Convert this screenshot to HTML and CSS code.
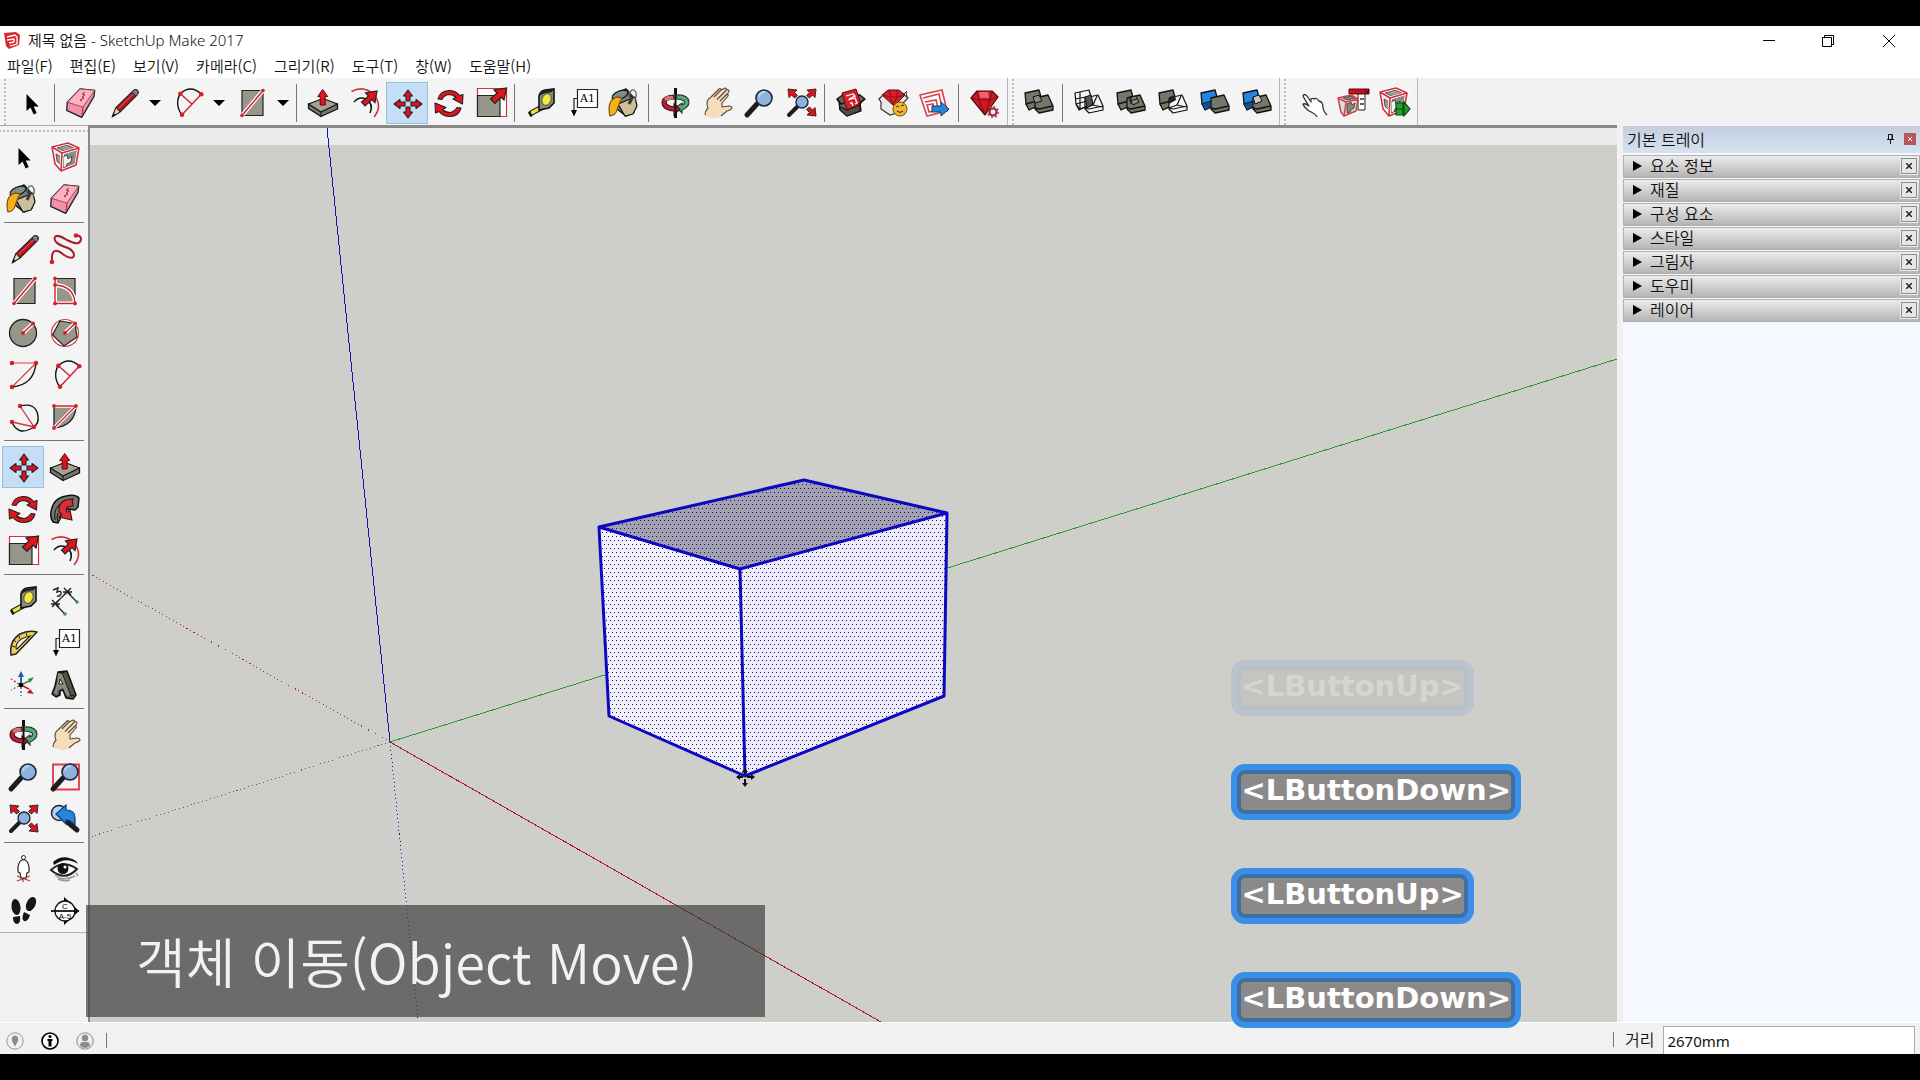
FILE: index.html
```html
<!DOCTYPE html>
<html lang="ko">
<head>
  <meta charset="UTF-8">
  <meta name="viewport" content="width=device-width, initial-scale=1.0">
  <title>제목 없음 - SketchUp Make 2017</title>
  <link rel="stylesheet" href="styles.css">
</head>
<body>
  <!-- icon sprite, every symbol is on a 42px grid -->
  <svg class="sprite" aria-hidden="true">
    <symbol id="i-select" viewBox="0 0 42 42">
      <path d="M16.500 12v17l4-3.600 3.200 7 3-1.300-3-6.600h5z"/>
    </symbol>
    <symbol id="i-eraser" viewBox="0 0 42 42">
      <path d="M20 7l14.700 1.300-.7 6-12.300 21-15-7 .6-8z" fill="#f78fa9" stroke="#222" stroke-width="1.300" stroke-linejoin="round"/>
      <path d="M20 7l14.700 1.300L23 25 7.300 20.300z" fill="#fbb3c4" stroke="#7a3a4a" stroke-width=".8"/>
      <path d="M23 25l-1.300 10" stroke="#7a3a4a"/>
      <path d="M25 10l-3 2 3 1-3 2 2 1-4 2 2 1" fill="none" stroke="#a02c48"/>
    </symbol>
    <symbol id="i-pencil" viewBox="0 0 42 42">
      <path d="M10.500 34.500l3.500-9L32 8q3-1 4 1Q37 11 35 13L18 30z" fill="#c01820" stroke="#222" stroke-width="1.200"/>
      <path d="M10.500 34.500l3.500-9 4 4.500z" fill="#e9d8a6" stroke="#222"/>
      <path d="M10 35l1.500-4 2 2z"/>
      <path d="M30 10l4 4 1.500-1.500q1.500-3-.5-4.500-2-1-3 0z" fill="#7d7f88" stroke="#222" stroke-width=".8"/>
      <path d="M17 26L31 12" stroke="#ee5a5a"/>
    </symbol>
    <symbol id="i-arc2" viewBox="0 0 42 42">
      <path d="M16 32.700A16 17 0 0 1 14.300 11.700Q25 2 35.300 12.300" fill="none" stroke="#111" stroke-width="1.400"/>
      <path d="M16 32.700L35.300 12.300M14.300 11.700L26 22" fill="none" stroke="#d4202c" stroke-width="1.400"/>
      <g fill="#d4202c"><circle cx="16" cy="32.700" r="2.300"/><circle cx="14.300" cy="11.700" r="2.300"/><circle cx="35.300" cy="12.300" r="2.300"/></g>
    </symbol>
    <symbol id="i-rect" viewBox="0 0 42 42">
      <path d="M12 8.500h21v25H12z" fill="#97968a" stroke="#222" stroke-width="1.200"/>
      <path d="M12 33.500l21-25" stroke="#fff" stroke-width="4"/>
      <path d="M12 33.500l21-25" stroke="#d4202c" stroke-width="1.500"/>
      <g fill="#d4202c"><circle cx="12" cy="33.500" r="1.800"/><circle cx="33" cy="8.500" r="1.800"/></g>
    </symbol>
    <symbol id="i-pushpull" viewBox="0 0 42 42">
      <path d="M6.500 22v4.500l12.500 8 16.500-7.500v-5z" fill="#77766a" stroke="#111" stroke-width="1.300" stroke-linejoin="round"/>
      <path d="M6.500 22L21 16.500 35.500 22 19 30z" fill="#a3a295" stroke="#111" stroke-width="1.200" stroke-linejoin="round"/>
      <path d="M19 30v4.500" stroke="#111"/>
      <path d="M20.700 7.500l5 7h-2.500v8.500h-5v-8.500h-2.500z" fill="#e0141e" stroke="#5a0a0e"/>
    </symbol>
    <symbol id="i-offset" viewBox="0 0 42 42">
      <path d="M7.500 9.500Q20 3 30 13q9 11 0 22" fill="none" stroke="#d4303a" stroke-width="1.600"/>
      <path d="M10 20q5-6 12-3 8 5 4 14" fill="none" stroke="#111" stroke-width="1.500"/>
      <path d="M33 9l-2 11.500-3-3-7 6.500-3.500-4 7-6-3-3z" fill="#e0141e" stroke="#222" stroke-width="1.200"/>
    </symbol>
    <symbol id="i-move" viewBox="0 0 42 42">
      <g fill="#e0141e" stroke="#222" stroke-width="1.100" stroke-linejoin="round">
        <path d="M22 8l4.500 6h-2.500v5h-4v-5h-2.500z"/>
        <path d="M22 36l4.500-6h-2.500v-5h-4v5h-2.500z"/>
        <path d="M8 22l6-4.500v2.500h5v4h-5v2.500z"/>
        <path d="M36 22l-6-4.500v2.500h-5v4h5v2.500z"/>
      </g>
    </symbol>
    <symbol id="i-rotate" viewBox="0 0 42 42">
      <g fill="#e0141e" stroke="#222" stroke-width="1.100" stroke-linejoin="round">
        <path d="M10 17Q12 9 21 8.500q7 0 10.500 5l3.500-1-.5 9.500-9.500-5 3-1.500q-3-3-7-3-5 .5-7 5z"/>
        <path d="M33 26q-2 8-11 8.500-7 0-11-5l-3.500 1.500L7 21l11 4.500-3.500 2q3 3 7.500 3 4-.5 7-5z"/>
      </g>
    </symbol>
    <symbol id="i-scale" viewBox="0 0 42 42">
      <path d="M7.500 6.500h29v28h-29z" fill="#fff" stroke="#d4303a" stroke-width="1.200"/>
      <path d="M7.500 13.500h22.500v21H7.500z" fill="#97968a" stroke="#222" stroke-width="1.200"/>
      <path d="M36.500 6l-2.500 12-3-3-6 6.500-4.500-4.500 6.500-6-3-3z" fill="#e0141e" stroke="#222" stroke-width="1.200"/>
    </symbol>
    <symbol id="i-tape" viewBox="0 0 42 42">
      <path d="M9.500 29.500l11-6 2 4-11 6z" fill="#f4e23a" stroke="#222" stroke-width="1.200"/>
      <path d="M9 30l2.500 4.500" stroke="#111" stroke-width="2.500"/>
      <path d="M19 14Q20 9 25 8l9-1v14l-5 5-10 2z" fill="#8a8a86" stroke="#111" stroke-width="1.600"/>
      <path d="M20 11q3-3 14-3.500l-3 3q-7 0-11 3z" fill="#222"/>
      <ellipse cx="26.500" cy="17.500" rx="4.500" ry="6" fill="#f4ea3c" stroke="#55553c" transform="rotate(20 26.500 17.500)"/>
    </symbol>
    <symbol id="i-paint" viewBox="0 0 42 42">
      <path d="M10 13l12-6 8 9 0 14-8 4-9-7z" fill="#77827f" stroke="#111" stroke-width="1.500" stroke-linejoin="round"/>
      <path d="M14 22l17-7 2 9-4 8-8 2z" fill="#cdbf9a" stroke="#111" stroke-width="1.200"/>
      <path d="M22 8l6 8-3 6" fill="none" stroke="#3a3a3a" stroke-width="3"/>
      <ellipse cx="16" cy="13" rx="8.500" ry="4" fill="#7e908d" stroke="#111" stroke-width="1.200" transform="rotate(-22 16 13)"/>
      <path d="M25 14q1-7 5-6 4 3 1 10" fill="none" stroke="#666" stroke-width="1.300"/>
      <path d="M18 16q-8-3-12 5-2 6 0 13 6-1 7-6 2-7 5-12z" fill="#f7b01c" stroke="#704c08" stroke-width="1.100"/>
    </symbol>
    <symbol id="i-orbit" viewBox="0 0 42 42">
      <path d="M22 13q12-1 13 7 0 5-7 8v3l-6-6 6-4v2q4-2 2-4-3-2-8-2z" fill="#5fa57a" stroke="#1d3f2a" stroke-width="1.100"/>
      <path d="M20 13Q8 14 8 20q0 8 12 9v4l6-6-6-5v3q-8-1-8-5 1-3 8-3z" fill="#c0203a" stroke="#4a0a14" stroke-width="1.100"/>
      <path d="M20 6h3v6h-3zM20.500 11h2v20h-2zM20 31h3v5h-3z" fill="#111"/>
      <path d="M10 16q4-3 9-2v3l-7 2z" fill="#cf7771"/>
    </symbol>
    <symbol id="i-hand" viewBox="0 0 42 42">
      <path d="M9 34q0-4 3-8-3-7 3-11l8-8q2-1 2 1l4-2q2 0 1 2 3-1 3 1t-3 4q3-1 2 1l-6 7 0 4 7-1q3 0 3 2-1 2-5 3-4 3-6 5-5 3-8 2z" fill="#f5ddbc"/>
      <path d="M9 33q0-4 3-7-3-7 3-11l8-8q2-1 2 1l4-2q2 0 1 2 3-1 3 1t-3 4q3-1 2 1l-6 7v4l7-1q3 0 3 2-1 2-5 3-4 3-6 5M25 8l-7 7M30 8.500l-9 9M30 13l-6 6" fill="none" stroke="#54493c" stroke-width="1.100" stroke-linejoin="round"/>
    </symbol>
    <symbol id="i-zoom" viewBox="0 0 42 42">
      <path d="M9 33l10-11" stroke="#1c1c1e" stroke-width="5" stroke-linecap="round"/>
      <circle cx="26" cy="16" r="8" fill="#8fb2dc" stroke="#1d2a3c" stroke-width="1.600"/>
      <path d="M21 15q1-5 6-5" fill="none" stroke="#bcd3ee" stroke-width="2"/>
    </symbol>
    <symbol id="i-extents" viewBox="0 0 42 42">
      <path d="M9 33l8-8" stroke="#1c1c1e" stroke-width="4" stroke-linecap="round"/>
      <circle cx="22" cy="20" r="6" fill="#8fb2dc" stroke="#1d2a3c" stroke-width="1.400"/>
      <g fill="#d8141e" stroke="#222" stroke-width=".9">
        <path d="M8 7l9 1-2.500 2.500 3 3-3 2.500-3-3L9 15.500z"/>
        <path d="M36 7l-9 1 2.500 2.500-3 3 3 2.500 3-3 2.500 2.500z"/>
        <path d="M36 34l-9-1 2.500-2.500-3-3 3-2.500 3 3 2.500-2.500z"/>
      </g>
    </symbol>
    <symbol id="i-warehouse" viewBox="0 0 42 42">
      <path d="M7 17l7-5 16 1 5 4-5 4 1 8-14 5-7-6-1-8z" fill="#6d6256" stroke="#111" stroke-width="1.300" stroke-linejoin="round"/>
      <path d="M12 11l14-4 5 15-14 6z" fill="#d91f2a" stroke="#5a0a0e"/>
      <path d="M16 14l7-2 2 2-6 3M18 18l7-2 2 5-2 1M20 21l2 0 1 3" fill="none" stroke="#fff" stroke-width="1.300"/>
      <path d="M10 25l7 3 13-5v6l-13 5-7-6z" fill="#544a40" stroke="#111"/>
      <path d="M7 17l4 5 3-1M35 17l-6 5" fill="none" stroke="#111" stroke-width="1.500"/>
    </symbol>
    <symbol id="i-extwarehouse" viewBox="0 0 42 42">
      <path d="M7 17l5-5 18-1 6 5-5 5v8l-13 4-9-6V20z" fill="#e8e8e8" stroke="#333" stroke-width="1.200"/>
      <path d="M10 13l6-5h11l6 5-11 11z" fill="#d3202b" stroke="#5a0a0e"/>
      <path d="M10 13l8 2 3 8 4-8 8-2M17 9l2 6h6v-6" fill="none" stroke="#8e0f18"/>
      <path d="M31 13l4-4M34 10l1 5" fill="none" stroke="#333"/>
      <circle cx="28" cy="27" r="7" fill="#f5b52c" stroke="#7a4a08"/>
      <path d="M24 25q2-2 3 0M29 24q2-2 3 0M25 29q3 3 6 0" fill="none" stroke="#222"/>
    </symbol>
    <symbol id="i-layout" viewBox="0 0 42 42">
      <path d="M6 13l22-5 5 21-20 5z" fill="#fff" stroke="#d8404a" stroke-width="1.600"/>
      <path d="M9 16l16-4 3 13M11 20l11-2 2 8M13 23l6-1 1 7-5 1z" fill="none" stroke="#d8404a" stroke-width="1.600"/>
      <path d="M18 24h9v-4l8 7-8 7v-4h-9z" fill="#2186e0" stroke="#123a66"/>
    </symbol>
    <symbol id="i-gem" viewBox="0 0 42 42">
      <path d="M7 16l6-7h15l6 6-13 18z" fill="#cf1a26" stroke="#4a060c" stroke-width="1.200" stroke-linejoin="round"/>
      <path d="M7 16l8 2 6 15 5-15 8-3M13 9l2 9h11l2-9" fill="none" stroke="#7c0a14"/>
      <path d="M15 10h9l1 6h-9z" fill="#ef6068"/>
      <circle cx="29" cy="30" r="3.500" fill="#f2f2f2" stroke="#9c3038" stroke-width="2.200"/>
      <circle cx="29" cy="30" r="5.300" fill="none" stroke="#9c3038" stroke-width="1.400" stroke-dasharray="2 2.100"/>
    </symbol>
    <!-- solid tools: two overlapping boxes -->
    <symbol id="i-boxback" viewBox="0 0 42 42">
      <path d="M7 11l14-3 4 14-13 5-4-5z"/><path d="M8 22l11-3v5l-8 4z"/>
    </symbol>
    <symbol id="i-boxfront" viewBox="0 0 42 42">
      <path d="M17 16l13-3 5 11v4l-14 3-4-4z"/><path d="M17 26l4 1 14-3"/>
    </symbol>
    <symbol id="i-shell" viewBox="0 0 42 42">
      <g fill="#77766a" stroke="#111" stroke-width="1.300" stroke-linejoin="round"><use href="#i-boxback"/><use href="#i-boxfront"/></g>
      <path d="M15 15l6-2 3 6-7 2z" fill="#8b8a7d" stroke="#111"/>
    </symbol>
    <symbol id="i-intersect" viewBox="0 0 42 42">
      <g fill="none" stroke="#111" stroke-width="1.200" stroke-linejoin="round"><use href="#i-boxback"/><use href="#i-boxfront"/><path d="M12 10v16M7 17l11-2M29 14l-4 9M25 23l9 2M25 23l-8 3"/></g>
      <path d="M17 15l6-2 2 9-6 4z" fill="#55544a" stroke="#111"/>
    </symbol>
    <symbol id="i-union" viewBox="0 0 42 42">
      <g fill="#77766a" stroke="#111" stroke-width="1.300" stroke-linejoin="round"><use href="#i-boxback"/><use href="#i-boxfront"/></g>
      <path d="M19 16l7-2 3 6-6 3zM21 14v8M19 19l8-2" fill="#8b8a7d" stroke="#111"/>
    </symbol>
    <symbol id="i-subtract" viewBox="0 0 42 42">
      <g fill="#77766a" stroke="#111" stroke-width="1.300" stroke-linejoin="round"><use href="#i-boxback"/></g>
      <g fill="#f4f4f4" stroke="#111" stroke-width="1.200" stroke-linejoin="round"><use href="#i-boxfront"/><path d="M29 14l-4 9 9 2M25 23l-8 3"/></g>
      <path d="M17 15l6-2 1 5-7 4z" fill="#222"/>
    </symbol>
    <symbol id="i-trim" viewBox="0 0 42 42">
      <g fill="#2186e0" stroke="#111" stroke-width="1.300" stroke-linejoin="round"><use href="#i-boxback"/></g>
      <g fill="#77766a" stroke="#111" stroke-width="1.300" stroke-linejoin="round"><use href="#i-boxfront"/></g>
      <path d="M8 22l8-2v5l-4 2z" fill="#14508f"/>
    </symbol>
    <symbol id="i-split" viewBox="0 0 42 42">
      <use href="#i-trim"/>
      <path d="M17 15l6-2 3 6-7 3z" fill="#c9c8cf" stroke="#111"/>
    </symbol>
    <symbol id="i-finger" viewBox="0 0 42 42">
      <path d="M27 35q-1-3-8-6-5-4-6-7 2-1 6 2-4-6-6-10 1-3 4 0l4 6q-1-5 3-3 2-2 5 2 4 1 4 6 0 4 4 8" fill="#fff" stroke="#333" stroke-width="1.300" stroke-linejoin="round"/>
    </symbol>
    <symbol id="i-component" viewBox="0 0 42 42">
      <path d="M8 11l16-4 11 5-3 17-15 6-6-7z" fill="#eceaea"/>
      <path d="M20 18l13-4-2 14-12 5z" fill="#8d8c84"/>
      <path d="M13 12l10-3 7 3-10 3zM12 18l5 3v8l-4-4z" fill="#a09f97" stroke="#333" stroke-width=".8"/>
      <path d="M19 21l4-2 1 4 4-3-1 6-4 2-1 3-3 1z" fill="#f2f2f2" stroke="#333" stroke-width=".9"/>
      <path d="M8 11l16-4 11 5-17 5zM18 17l-1 18M8 11l3 17 6 7 15-6 3-17" fill="none" stroke="#fff" stroke-width="3.200"/>
      <path d="M8 11l16-4 11 5-17 5zM18 17l-1 18M8 11l3 17 6 7 15-6 3-17" fill="none" stroke="#d3303c" stroke-width="1.600" stroke-linejoin="round"/>
    </symbol>
    <symbol id="i-compopt" viewBox="0 0 42 42">
      <path d="M17 7h20v5H17z" fill="#c9101c" stroke="#5a0a0e"/><path d="M33 8l2 3 2-3" fill="none" stroke="#400"/>
      <path d="M26 12h7v16h-7z" fill="#fff" stroke="#222"/><path d="M28 17h4M28 22h4" stroke="#333" stroke-width="1.500"/>
      <path d="M6 16l13-3 7 4-2 12-12 5-3-4z" fill="#dddbd8"/>
      <path d="M15 22l4-2 1 3 3-2-1 5-3 2-1 2-3 1zM11 16l8-2 4 2-8 2z" fill="#88877f" stroke="#333" stroke-width=".8"/>
      <path d="M6 16l13-3 7 4-12 3zM14 20l-2 14M6 16l3 14 3 4 12-5 2-12" fill="none" stroke="#d3404a" stroke-width="1.500" stroke-linejoin="round"/>
    </symbol>
    <symbol id="i-compattr" viewBox="0 0 42 42">
      <use href="#i-component" x="-2" y="-1"/>
      <path d="M22 21h7v12h-7zM30 20l6 7-6 7z" fill="#25a031" stroke="#0e4a14" stroke-width="1.200"/><path d="M22 27h7" stroke="#0e4a14"/>
    </symbol>
    <symbol id="i-freehand" viewBox="0 0 42 42">
      <path d="M8 33c-1-14 6-11 12-6 12 8 13-3 4-7C14 17 9 13 11 9c2-3 7 0 12 3 6 3 13 6 14-1 0-3-3-4-5-3" fill="none" stroke="#a81c2a" stroke-width="2"/>
      <g fill="#d4202c"><circle cx="8" cy="34" r="2.300"/><circle cx="32" cy="7.500" r="2.300"/></g>
    </symbol>
    <symbol id="i-rotrect" viewBox="0 0 42 42">
      <path d="M11 8.500h20v25H11z" fill="#97968a" stroke="#222" stroke-width="1.200"/>
      <path d="M11 8.500v25h20Q30 16 11 15" fill="none" stroke="#fff" stroke-width="4"/>
      <path d="M11 8.500v25h20Q30 16 11 15" fill="none" stroke="#d4202c" stroke-width="1.400"/>
      <g fill="#d4202c"><circle cx="11" cy="8.500" r="1.900"/><circle cx="11" cy="15" r="1.900"/><circle cx="11" cy="33.500" r="1.900"/><circle cx="31" cy="33.500" r="1.900"/></g>
    </symbol>
    <symbol id="i-circle" viewBox="0 0 42 42">
      <circle cx="21" cy="21" r="13.500" fill="#97968a" stroke="#222" stroke-width="1.300"/>
      <path d="M21 21l10-9.500" stroke="#fff" stroke-width="4"/><path d="M21 21l10-9.500" stroke="#d4202c" stroke-width="1.500"/>
      <g fill="#d4202c"><circle cx="21" cy="21" r="2"/><circle cx="31" cy="11.500" r="2"/></g>
    </symbol>
    <symbol id="i-polygon" viewBox="0 0 42 42">
      <circle cx="21" cy="21" r="13.500" fill="#fff" stroke="#d4404a" stroke-width="1.200"/>
      <path d="M16 9L31 11.500 33 25 20 34 8.500 23z" fill="#97968a" stroke="#222" stroke-width="1.200"/>
      <path d="M21 21l10-9.500" stroke="#fff" stroke-width="4"/><path d="M21 21l10-9.500" stroke="#d4202c" stroke-width="1.500"/>
      <g fill="#d4202c"><circle cx="21" cy="21" r="2"/><circle cx="31" cy="11.500" r="2"/></g>
    </symbol>
    <symbol id="i-arc" viewBox="0 0 42 42">
      <path d="M10 33q22-2 24-24" fill="none" stroke="#111" stroke-width="1.400"/>
      <path d="M10 9h24L10 33" fill="none" stroke="#d4404a" stroke-width="1.200"/>
      <g fill="#d4202c"><circle cx="10" cy="9" r="2.300"/><circle cx="34" cy="9" r="2.300"/><circle cx="10" cy="33" r="2.300"/></g>
    </symbol>
    <symbol id="i-arc3" viewBox="0 0 42 42">
      <path d="M18 10Q34 6 36 20q1 7-4 11Q16 41 10 26" fill="none" stroke="#111" stroke-width="1.400"/>
      <path d="M18 10l14 21-22-5" fill="none" stroke="#d4303a" stroke-width="1.300"/>
      <g fill="#d4202c"><circle cx="18" cy="10" r="2.200"/><circle cx="32" cy="31" r="2.200"/><circle cx="10" cy="26" r="2.200"/></g>
    </symbol>
    <symbol id="i-pie" viewBox="0 0 42 42">
      <path d="M10 10h22q-1 20-22 22z" fill="#97968a" stroke="#222" stroke-width="1.300"/>
      <path d="M10 32l22-22H10" fill="none" stroke="#fff" stroke-width="3.500"/>
      <path d="M10 32l22-22H10" fill="none" stroke="#d4202c" stroke-width="1.300"/>
      <g fill="#d4202c"><circle cx="10" cy="10" r="1.900"/><circle cx="32" cy="10" r="1.900"/><circle cx="10" cy="32" r="1.900"/></g>
    </symbol>
    <symbol id="i-followme" viewBox="0 0 42 42">
      <path d="M7 24Q9 10 22 8q9-2 13 2l-1 9-3 3-6-1q-9 1-8 8l-3 6-5-1q-3-4-2-10z" fill="#77766a" stroke="#111" stroke-width="1.500" stroke-linejoin="round"/>
      <path d="M11 32Q8 14 30 11M14 34q-2-5 0-9" fill="none" stroke="#111"/>
      <path d="M28 11q-14 1-13 11 0 3 3 5l-3 2 13 3-2-10-3 2q-3-6 6-6z" fill="#d8303a" stroke="#4a0a0e" stroke-width="1.100"/>
    </symbol>
    <symbol id="i-dimension" viewBox="0 0 42 42">
      <path d="M11 24l13-13M12 25l9 9M23 12l9 9" stroke="#222" stroke-width="1.300"/>
      <path d="M8 20l7 7M7 24h9M15 20l-7 7M20 8l7 7M19 12h9M27 8l-7 7" stroke="#222" stroke-width="1.400"/>
      <path d="M9 10l5-2-1 4q5-2 4 2-2 3-4 2" fill="none" stroke="#222" stroke-width="1.400"/>
      <g fill="#3f9a46"><circle cx="21" cy="34" r="1.800"/><circle cx="33" cy="22" r="1.800"/></g>
    </symbol>
    <symbol id="i-protractor" viewBox="0 0 42 42">
      <path d="M9 33Q7 19 18 12q8-4 17-2L14 32z" fill="#e8cf52" stroke="#222" stroke-width="1.500" stroke-linejoin="round"/>
      <path d="M14 26q0-9 14-12L15 27z" fill="#f4f4f4" stroke="#222" stroke-width="1.200"/>
      <path d="M10 24l3 1M12 18l2 2M17 14l1 3M24 11l1 3" stroke="#222"/>
    </symbol>
    <symbol id="i-axes" viewBox="0 0 42 42">
      <path d="M19 21v-9" stroke="#2a58a8" stroke-width="1.800"/><path d="M19 21l10-5" stroke="#2f8f3f" stroke-width="1.500"/><path d="M19 21l8 4" stroke="#c01820" stroke-width="1.500"/>
      <path d="M19 7l3 6h-6z" fill="#2a58a8"/><path d="M32 13l-4 6-2-4z" fill="#2f8f3f"/><path d="M32 30l-7-1 3-4z" fill="#c01820"/>
      <path d="M19 23v9" stroke="#2a58a8" stroke-width="1.300" stroke-dasharray="2 2"/><path d="M17 22l-8 4" stroke="#2f8f3f" stroke-width="1.300" stroke-dasharray="2 2"/><path d="M17 20l-8-5" stroke="#c01820" stroke-width="1.300" stroke-dasharray="2 2"/>
      <circle cx="19" cy="21" r="2.300"/>
    </symbol>
    <symbol id="i-text3d" viewBox="0 0 42 42">
      <path d="M14 8l9-1 9 24-3 4-7-1-3-8-3 1v4l-4 2-4-3 3-8z" fill="#55554e" stroke="#111" stroke-width="1.500" stroke-linejoin="round"/>
      <path d="M14 8l4 1 9 23 3-1M18 9l5-2" fill="none" stroke="#111"/>
      <path d="M14 9l4 1 8 21-3 1-4-8-5 2-1 5-3-2 3-9z" fill="#8b8a80"/><path d="M15 20l1-5 3 5z" fill="#f4f4f4" stroke="#222"/>
    </symbol>
    <symbol id="i-zoomwin" viewBox="0 0 42 42">
      <path d="M9 8.500h26v25H9z" fill="none" stroke="#dc3a44" stroke-width="1.800"/><use href="#i-zoom"/>
    </symbol>
    <symbol id="i-previous" viewBox="0 0 42 42">
      <circle cx="15" cy="15" r="7.500" fill="#b9d1ec" stroke="#1d2a3c" stroke-width="1.500"/>
      <path d="M21 22l12 10" stroke="#1c1c1e" stroke-width="5" stroke-linecap="round"/>
      <path d="M12 16l10-9v5q9 0 9 8v7q-4-5-9-5v4z" fill="#2186e0" stroke="#123a66" stroke-width="1.200"/>
    </symbol>
    <symbol id="i-camera" viewBox="0 0 42 42">
      <path d="M15 33l13-5M15 28l13 5M21 26v8" stroke="#d4303a" stroke-width="1.300"/>
      <circle cx="21.500" cy="9.500" r="2" fill="#fff" stroke="#222"/>
      <path d="M20 12q-3 1-4 7v5l2 1 1 5h5l1-5 2-1v-5q-1-6-4-7z" fill="#fff" stroke="#222" stroke-width="1.200"/>
    </symbol>
    <symbol id="i-look" viewBox="0 0 42 42">
      <path d="M9 14q10-9 23-1l2 3Q22 8 10 17z" fill="#111"/>
      <path d="M7 22q12-11 26-1-12 13-26 1z" fill="#fff" stroke="#222" stroke-width="2"/>
      <circle cx="19" cy="20.500" r="5.500" fill="#111"/><circle cx="21" cy="19" r="1.500" fill="#fff"/>
      <path d="M11 27q8 7 20 1M14 31q7 3 12 1M32 25l2 3" fill="none" stroke="#999" stroke-width="1.500"/>
    </symbol>
    <symbol id="i-walk" viewBox="0 0 42 42">
      <g fill="#161616"><ellipse cx="14" cy="17" rx="4.500" ry="8" transform="rotate(-8 14 17)"/><path d="M11 27l7-1q1 7-3 8-4 0-4-7z"/><ellipse cx="29" cy="14" rx="4.500" ry="7.500" transform="rotate(25 29 14)"/><path d="M22 22l6 3q-2 7-6 6-3-2 0-9z"/></g>
    </symbol>
  </svg>

  <div class="app">
    <header class="titlebar">
      <svg class="logo" viewBox="0 0 18 18" aria-hidden="true">
        <path d="M1 2l12-1 4 3-1 10-10 4-3-3z" fill="#d9252c"/>
        <path d="M4 6l8-2 2 2v7l-7 2M4 9l7-1v3l-5 1" fill="none" stroke="#fff" stroke-width="1.300"/>
      </svg>
      <h1>제목 없음 - SketchUp Make 2017</h1>
      <div class="window-buttons">
        <button type="button" aria-label="최소화"><svg viewBox="0 0 12 12"><path d="M0 5.500h12"/></svg></button>
        <button type="button" aria-label="이전 크기로"><svg viewBox="0 0 12 12"><path d="M.5 2.500h9v9h-9zM2.500 2.500v-2h9v9h-2"/></svg></button>
        <button type="button" aria-label="닫기"><svg viewBox="0 0 12 12"><path d="M0 0l12 12M12 0L0 12"/></svg></button>
      </div>
    </header>
    <nav class="menu">
      <a href="#">파일(F)</a>
      <a href="#">편집(E)</a>
      <a href="#">보기(V)</a>
      <a href="#">카메라(C)</a>
      <a href="#">그리기(R)</a>
      <a href="#">도구(T)</a>
      <a href="#">창(W)</a>
      <a href="#">도움말(H)</a>
    </nav>

    <div class="toolbar">
      <div class="group">
        <button class="tool" type="button" aria-label="선택"><svg><use href="#i-select"/></svg></button>
        <span class="sep"></span>
        <button class="tool" type="button" aria-label="지우개"><svg><use href="#i-eraser"/></svg></button>
        <button class="tool" type="button" aria-label="선"><svg><use href="#i-pencil"/></svg></button>
        <button class="more" type="button" aria-label="선 도구 더 보기"></button>
        <button class="tool" type="button" aria-label="호"><svg><use href="#i-arc2"/></svg></button>
        <button class="more" type="button" aria-label="호 도구 더 보기"></button>
        <button class="tool" type="button" aria-label="직사각형"><svg><use href="#i-rect"/></svg></button>
        <button class="more" type="button" aria-label="도형 도구 더 보기"></button>
        <span class="sep"></span>
        <button class="tool" type="button" aria-label="밀기/끌기"><svg><use href="#i-pushpull"/></svg></button>
        <button class="tool" type="button" aria-label="오프셋"><svg><use href="#i-offset"/></svg></button>
        <button class="tool active" type="button" aria-label="이동"><svg><use href="#i-move"/></svg></button>
        <button class="tool" type="button" aria-label="회전"><svg><use href="#i-rotate"/></svg></button>
        <button class="tool" type="button" aria-label="배율"><svg><use href="#i-scale"/></svg></button>
        <span class="sep"></span>
        <button class="tool" type="button" aria-label="줄자"><svg><use href="#i-tape"/></svg></button>
        <button class="tool" type="button" aria-label="텍스트">
          <svg viewBox="0 0 42 42">
            <path d="M15.500 7.500h20v18h-20z" fill="#fff" stroke="#222" stroke-width="1.200"/>
            <path d="M15.500 16.500H12v12" fill="none" stroke="#222" stroke-width="1.200"/>
            <path d="M9 28h6l-3 6.500z"/>
            <text class="icon-label" x="25.500" y="20" text-anchor="middle">A1</text>
          </svg>
        </button>
        <button class="tool" type="button" aria-label="페인트통"><svg><use href="#i-paint"/></svg></button>
        <span class="sep"></span>
        <button class="tool" type="button" aria-label="궤도"><svg><use href="#i-orbit"/></svg></button>
        <button class="tool" type="button" aria-label="이동 보기"><svg><use href="#i-hand"/></svg></button>
        <button class="tool" type="button" aria-label="확대/축소"><svg><use href="#i-zoom"/></svg></button>
        <button class="tool" type="button" aria-label="범위 확대"><svg><use href="#i-extents"/></svg></button>
        <span class="sep"></span>
        <button class="tool" type="button" aria-label="3D 웨어하우스"><svg><use href="#i-warehouse"/></svg></button>
        <button class="tool" type="button" aria-label="확장 웨어하우스"><svg><use href="#i-extwarehouse"/></svg></button>
        <button class="tool" type="button" aria-label="LayOut으로 보내기"><svg><use href="#i-layout"/></svg></button>
        <span class="sep"></span>
        <button class="tool" type="button" aria-label="확장 관리자"><svg><use href="#i-gem"/></svg></button>
      </div>
      <div class="group">
        <button class="tool" type="button" aria-label="외부 셸"><svg><use href="#i-shell"/></svg></button>
        <span class="sep"></span>
        <button class="tool" type="button" aria-label="교차"><svg><use href="#i-intersect"/></svg></button>
        <button class="tool" type="button" aria-label="결합"><svg><use href="#i-union"/></svg></button>
        <button class="tool" type="button" aria-label="빼기"><svg><use href="#i-subtract"/></svg></button>
        <button class="tool" type="button" aria-label="트림"><svg><use href="#i-trim"/></svg></button>
        <button class="tool" type="button" aria-label="분할"><svg><use href="#i-split"/></svg></button>
      </div>
      <div class="group">
        <button class="tool" type="button" aria-label="상호 작용"><svg><use href="#i-finger"/></svg></button>
        <button class="tool" type="button" aria-label="구성 요소 옵션"><svg><use href="#i-compopt"/></svg></button>
        <button class="tool" type="button" aria-label="구성 요소 속성"><svg><use href="#i-compattr"/></svg></button>
      </div>
    </div>

    <main class="workspace">
      <aside class="palette">
        <div class="palette-tools">
          <button class="tool" type="button" aria-label="선택"><svg><use href="#i-select"/></svg></button>
          <button class="tool" type="button" aria-label="구성 요소 만들기"><svg><use href="#i-component"/></svg></button>
          <button class="tool" type="button" aria-label="페인트통"><svg><use href="#i-paint"/></svg></button>
          <button class="tool" type="button" aria-label="지우개"><svg><use href="#i-eraser"/></svg></button>
          <span class="rule"></span>
          <button class="tool" type="button" aria-label="선"><svg><use href="#i-pencil"/></svg></button>
          <button class="tool" type="button" aria-label="자유 곡선"><svg><use href="#i-freehand"/></svg></button>
          <button class="tool" type="button" aria-label="직사각형"><svg><use href="#i-rect"/></svg></button>
          <button class="tool" type="button" aria-label="회전 직사각형"><svg><use href="#i-rotrect"/></svg></button>
          <button class="tool" type="button" aria-label="원"><svg><use href="#i-circle"/></svg></button>
          <button class="tool" type="button" aria-label="다각형"><svg><use href="#i-polygon"/></svg></button>
          <button class="tool" type="button" aria-label="호"><svg><use href="#i-arc"/></svg></button>
          <button class="tool" type="button" aria-label="2점 호"><svg><use href="#i-arc2"/></svg></button>
          <button class="tool" type="button" aria-label="3점 호"><svg><use href="#i-arc3"/></svg></button>
          <button class="tool" type="button" aria-label="파이"><svg><use href="#i-pie"/></svg></button>
          <span class="rule"></span>
          <button class="tool active" type="button" aria-label="이동"><svg><use href="#i-move"/></svg></button>
          <button class="tool" type="button" aria-label="밀기/끌기"><svg><use href="#i-pushpull"/></svg></button>
          <button class="tool" type="button" aria-label="회전"><svg><use href="#i-rotate"/></svg></button>
          <button class="tool" type="button" aria-label="따라가기"><svg><use href="#i-followme"/></svg></button>
          <button class="tool" type="button" aria-label="배율"><svg><use href="#i-scale"/></svg></button>
          <button class="tool" type="button" aria-label="오프셋"><svg><use href="#i-offset"/></svg></button>
          <span class="rule"></span>
          <button class="tool" type="button" aria-label="줄자"><svg><use href="#i-tape"/></svg></button>
          <button class="tool" type="button" aria-label="치수"><svg><use href="#i-dimension"/></svg></button>
          <button class="tool" type="button" aria-label="각도기"><svg><use href="#i-protractor"/></svg></button>
          <button class="tool" type="button" aria-label="텍스트">
            <svg viewBox="0 0 42 42">
              <path d="M15.500 7.500h20v18h-20z" fill="#fff" stroke="#222" stroke-width="1.200"/>
              <path d="M15.500 16.500H12v12" fill="none" stroke="#222" stroke-width="1.200"/>
              <path d="M9 28h6l-3 6.500z"/>
              <text class="icon-label" x="25.500" y="20" text-anchor="middle">A1</text>
            </svg>
          </button>
          <button class="tool" type="button" aria-label="축"><svg><use href="#i-axes"/></svg></button>
          <button class="tool" type="button" aria-label="3D 텍스트"><svg><use href="#i-text3d"/></svg></button>
          <span class="rule"></span>
          <button class="tool" type="button" aria-label="궤도"><svg><use href="#i-orbit"/></svg></button>
          <button class="tool" type="button" aria-label="이동 보기"><svg><use href="#i-hand"/></svg></button>
          <button class="tool" type="button" aria-label="확대/축소"><svg><use href="#i-zoom"/></svg></button>
          <button class="tool" type="button" aria-label="창 확대"><svg><use href="#i-zoomwin"/></svg></button>
          <button class="tool" type="button" aria-label="범위 확대"><svg><use href="#i-extents"/></svg></button>
          <button class="tool" type="button" aria-label="이전 보기"><svg><use href="#i-previous"/></svg></button>
          <span class="rule"></span>
          <button class="tool" type="button" aria-label="카메라 배치"><svg><use href="#i-camera"/></svg></button>
          <button class="tool" type="button" aria-label="둘러보기"><svg><use href="#i-look"/></svg></button>
          <button class="tool" type="button" aria-label="걷기"><svg><use href="#i-walk"/></svg></button>
          <button class="tool" type="button" aria-label="단면">
            <svg viewBox="0 0 42 42">
              <path d="M20 7l15 14-15 14z"/>
              <circle cx="21" cy="21" r="10" fill="#fff" stroke="#111" stroke-width="1.300"/>
              <path d="M7 21h28" stroke="#111" stroke-width="1.800"/>
              <text class="icon-note" x="21" y="19" text-anchor="middle">C</text>
              <text class="icon-note" x="21" y="29" text-anchor="middle">A-5</text>
            </svg>
          </button>
        </div>
      </aside>

      <section class="canvas">
        <svg class="model" viewBox="90 128 1527 894" preserveAspectRatio="xMinYMin slice" role="img" aria-label="3D 모델">
          <defs>
            <pattern id="dots" width="4" height="8" patternUnits="userSpaceOnUse">
              <path d="M0 0h1v1H0zM2 4h1v1H2z" fill="#14145a"/>
            </pattern>
          </defs>
          <rect class="sky" x="90" y="128" width="1527" height="17"/>
          <g class="axes">
            <path d="M390 742L327 128" stroke="#1414a8"/>
            <path d="M390 742L1617 359" stroke="#2e9a2e"/>
            <path d="M390 742L881 1022" stroke="#b01030"/>
            <path d="M390 742L418 1019" stroke="#1414a8" stroke-dasharray="1 3"/>
            <path d="M390 742L90 837" stroke="#2e7a2e" stroke-dasharray="1 3"/>
            <path d="M390 742L90 574" stroke="#c02030" stroke-dasharray="1 3"/>
          </g>
          <path d="M599 527L740 569 745 776 609 716z" fill="#f4f2ff"/>
          <path d="M740 569L947 513 944 696 745 776z" fill="#eeecfc"/>
          <path d="M599 527L804 480 947 513 740 569z" fill="#a3a0b2"/>
          <path d="M599 527L804 480 947 513 944 696 745 776 609 716z" fill="url(#dots)" shape-rendering="crispEdges"/>
          <g class="edges">
            <path d="M599 527L804 480 947 513 944 696 745 776 609 716z"/>
            <path d="M599 527L740 569 947 513M740 569L745 776"/>
          </g>
          <g class="cursor">
            <path d="M745 768l3 4h-2v3h-2v-3h-2zM745 787l3-4h-2v-4h-2v4h-2zM736 777l4-3v2h3v2h-3v2zM755 777l-4-3v2h-4v2h4v2z"/>
          </g>
        </svg>
        <ul class="keys">
          <li class="fading">&lt;LButtonUp&gt;</li>
          <li>&lt;LButtonDown&gt;</li>
          <li>&lt;LButtonUp&gt;</li>
          <li>&lt;LButtonDown&gt;</li>
        </ul>
        <p class="caption">객체 이동(Object Move)</p>
      </section>

      <aside class="tray">
        <header class="tray-header">
          <h2>기본 트레이</h2>
          <button class="pin" type="button" aria-label="고정"><svg viewBox="0 0 8 10"><path d="M1.500 5.500v-5h4v5M0 5.500h7M3.500 6v4M5 1v4"/></svg></button>
          <button class="close" type="button" aria-label="닫기"><svg viewBox="0 0 6 6"><path d="M1 1l4 4M5 1L1 5"/></svg></button>
        </header>
        <div class="panel"><button class="toggle" type="button">요소 정보</button><button class="dismiss" type="button" aria-label="요소 정보 닫기"><svg viewBox="0 0 6 6"><path d="M0 0l6 6M6 0L0 6"/></svg></button></div>
        <div class="panel"><button class="toggle" type="button">재질</button><button class="dismiss" type="button" aria-label="재질 닫기"><svg viewBox="0 0 6 6"><path d="M0 0l6 6M6 0L0 6"/></svg></button></div>
        <div class="panel"><button class="toggle" type="button">구성 요소</button><button class="dismiss" type="button" aria-label="구성 요소 닫기"><svg viewBox="0 0 6 6"><path d="M0 0l6 6M6 0L0 6"/></svg></button></div>
        <div class="panel"><button class="toggle" type="button">스타일</button><button class="dismiss" type="button" aria-label="스타일 닫기"><svg viewBox="0 0 6 6"><path d="M0 0l6 6M6 0L0 6"/></svg></button></div>
        <div class="panel"><button class="toggle" type="button">그림자</button><button class="dismiss" type="button" aria-label="그림자 닫기"><svg viewBox="0 0 6 6"><path d="M0 0l6 6M6 0L0 6"/></svg></button></div>
        <div class="panel"><button class="toggle" type="button">도우미</button><button class="dismiss" type="button" aria-label="도우미 닫기"><svg viewBox="0 0 6 6"><path d="M0 0l6 6M6 0L0 6"/></svg></button></div>
        <div class="panel"><button class="toggle" type="button">레이어</button><button class="dismiss" type="button" aria-label="레이어 닫기"><svg viewBox="0 0 6 6"><path d="M0 0l6 6M6 0L0 6"/></svg></button></div>
      </aside>
    </main>

    <footer class="statusbar">
      <div class="status-icons">
        <button type="button" aria-label="지리적 위치"><svg viewBox="0 0 18 18"><circle cx="9" cy="9" r="8.200" fill="none" stroke="#999"/><path d="M9 14.500L6 9q-1-5 3-5.500 4 .5 3 5.500z" fill="#8c8c8c"/></svg></button>
        <button type="button" aria-label="크레딧"><svg viewBox="0 0 18 18"><circle cx="9" cy="9" r="8" fill="#fff" stroke="#000" stroke-width="1.600"/><circle cx="9" cy="4.500" r="1.600"/><path d="M6.500 7h5v2h-1v5.500h-3V9h-1z"/></svg></button>
        <button type="button" aria-label="로그인"><svg viewBox="0 0 18 18"><circle cx="9" cy="9" r="8.200" fill="#eee" stroke="#8c8c8c"/><circle cx="9" cy="6" r="3.200" fill="#8c8c8c"/><path d="M4 14q0-4 3-4h4q3 0 3 4-5 4-10 0z" fill="#8c8c8c"/></svg></button>
      </div>
      <div class="measure">
        <label for="distance">거리</label>
        <input id="distance" type="text" value="2670mm">
      </div>
    </footer>
  </div>
</body>
</html>
```
FILE: styles.css
```css
* {
  box-sizing: border-box;
}
body {
  margin: 0;
  padding: 26px 0;
  height: 100vh;
  background: #000;
  color: #111;
  font-family: "Noto Sans CJK KR", "Noto Sans", sans-serif;
  font-size: 16px;
  font-weight: 350;
}
button {
  padding: 0;
  border: none;
  background: none;
  color: inherit;
  font: inherit;
}
.sprite {
  position: absolute;
  width: 0;
  height: 0;
}
.app {
  display: flex;
  flex-direction: column;
  height: 100%;
  background: #f1f1f1;
  overflow: hidden;
}

/* title and menu */
.titlebar {
  display: flex;
  align-items: center;
  height: 28px;
  padding-left: 3px;
  background: #fff;
}
.logo {
  width: 18px;
  height: 18px;
  margin-right: 7px;
}
.titlebar h1 {
  flex: 1;
  margin: 0;
  font-family: "Noto Sans", "Noto Sans CJK KR", sans-serif;
  font-size: 15px;
  font-weight: 350;
  line-height: 26px;
}
.window-buttons {
  display: flex;
}
.window-buttons button {
  width: 59px;
  height: 28px;
}
.window-buttons button:last-child {
  width: 63px;
}
.window-buttons svg {
  width: 12px;
  height: 12px;
  overflow: visible;
  fill: none;
  stroke: #000;
}
.menu {
  display: flex;
  align-items: center;
  gap: 17px;
  height: 24px;
  padding: 0 7px;
  background: #fff;
  font-size: 15px;
}
.menu a {
  color: #111;
  line-height: 24px;
  text-decoration: none;
}

/* tool bars */
.toolbar {
  display: flex;
  height: 47px;
  background: #f1f1f1;
}
.group {
  display: flex;
  align-items: center;
  padding: 4px 1px 1px 10px;
  border-right: 1px solid #b4b4b4;
  background: radial-gradient(circle, #bdbdbd 1px, transparent 1px) 3px 4px / 4px 4px repeat-y, #f4f4f4;
}
.tool {
  width: 42px;
  height: 42px;
}
.tool svg {
  display: block;
  width: 42px;
  height: 42px;
}
.tool.active {
  background: #c5ddf5;
  box-shadow: inset 0 0 0 1px #92c0e8;
}
.more {
  display: flex;
  justify-content: center;
  width: 22px;
}
.more::before {
  content: "";
  border: 6px solid transparent;
  border-top-color: #000;
  border-bottom: none;
}
.sep {
  width: 1px;
  height: 38px;
  margin: 0 5px 0 2px;
  background: #777;
}
.icon-label {
  font: 11px "DejaVu Serif", serif;
}
.icon-note {
  font: 8px "Liberation Sans", sans-serif;
}

/* work area */
.workspace {
  display: flex;
  flex: 1;
  min-height: 0;
}
.palette {
  width: 88px;
  border-top: 1px solid #a9a9a9;
  background: #f1f1f1;
}
.palette-tools {
  display: grid;
  grid-template-columns: 42px 42px;
  padding: 10px 2px 0;
  border-bottom: 1px solid #b4b4b4;
  background: radial-gradient(circle, #bdbdbd 1px, transparent 1px) 2px 3px / 4px 4px repeat-x, #f4f4f4;
}
.rule {
  grid-column: span 2;
  height: 1px;
  margin: 2px 2px 5px;
  background: #777;
}
.canvas {
  position: relative;
  flex: 1;
  min-width: 0;
  border: 2px solid #8a8a8a;
  border-top: 3px solid #888;
  border-right: none;
  border-bottom: none;
  background: #cececa;
}
.model {
  display: block;
  width: 100%;
  height: 100%;
}
.sky {
  fill: #e9ebec;
}
.axes path {
  fill: none;
  shape-rendering: crispEdges;
}
.edges path {
  fill: none;
  stroke: #0c08c0;
  stroke-width: 3;
  stroke-linejoin: round;
}
.cursor path {
  fill: #111;
}
.keys {
  position: absolute;
  right: 96px;
  bottom: -6px;
  display: flex;
  flex-direction: column;
  align-items: flex-start;
  gap: 48px;
  margin: 0;
  padding: 0;
  list-style: none;
}
.keys li {
  height: 56px;
  padding: 0 4px;
  border: 6px solid #3c8fe8;
  border-radius: 14px;
  background: #8b898a;
  box-shadow: inset 0 0 0 4px #3f6ea5;
  color: #fff;
  font-family: "DejaVu Sans", sans-serif;
  font-size: 29px;
  font-weight: 700;
  line-height: 40px;
}
.keys .fading {
  opacity: 0.14;
}
.caption {
  position: absolute;
  left: -4px;
  bottom: 5px;
  margin: 0;
  padding: 0 68px 0 50px;
  background: rgba(60, 60, 60, 0.68);
  color: #f2f2f2;
  font-size: 54px;
  line-height: 112px;
  white-space: nowrap;
}

/* tray */
.tray {
  width: 303px;
  padding: 1px 0 0 6px;
  background: linear-gradient(#f1f1f1, #f1f1f1) 0 0 / 6px 100% no-repeat, #f5f8ff;
}
.tray-header {
  display: flex;
  align-items: center;
  height: 27px;
  margin-bottom: 2px;
  padding: 0 4px 1px;
  background: linear-gradient(#c3cfdf, #d6e1f1);
}
.tray-header h2 {
  flex: 1;
  margin: 0;
  font-size: 16px;
  font-weight: 350;
}
.tray-header svg {
  display: block;
  fill: none;
  stroke: #111;
}
.pin {
  margin-right: 9px;
}
.pin svg {
  width: 8px;
  height: 10px;
}
.close {
  padding: 3px;
  background: #b9555c;
}
.close svg {
  width: 6px;
  height: 6px;
  stroke: #fff;
}
.panel {
  display: flex;
  align-items: center;
  height: 23px;
  margin-bottom: 1px;
  padding: 0 2px 2px 0;
  border: 1px solid #b0b0b0;
  background: linear-gradient(#ececec, #b4b4b4);
}
.toggle {
  display: flex;
  align-items: center;
  flex: 1;
  padding-left: 9px;
  line-height: 19px;
}
.toggle::before {
  content: "";
  margin-right: 8px;
  border: 5px solid transparent;
  border-left: 9px solid #000;
  border-right: none;
}
.dismiss {
  display: flex;
  align-items: center;
  justify-content: center;
  width: 16px;
  height: 16px;
  border: 1px solid #8c8c8c;
  outline: 1px solid #eee;
  background: #e6e6e6;
}
.dismiss svg {
  width: 6px;
  height: 6px;
  stroke: #222;
  stroke-width: 1.5;
}

/* status bar */
.statusbar {
  display: flex;
  justify-content: space-between;
  height: 32px;
  border-top: 1px solid #fff;
}
.status-icons {
  display: flex;
  align-items: center;
  gap: 17px;
  height: 15px;
  margin: 10px 0 0 6px;
  padding-right: 12px;
  border-right: 1px solid #777;
}
.status-icons svg {
  display: block;
  width: 18px;
  height: 18px;
}
.measure {
  display: flex;
  width: 307px;
}
.measure label {
  height: 15px;
  margin: 9px 9px 0 0;
  padding-left: 11px;
  border-left: 1px solid #777;
  font-size: 16px;
  line-height: 15px;
}
.measure input {
  flex: 1;
  min-width: 0;
  height: 30px;
  margin: 3px 5px 0 0;
  padding: 0 3px;
  border: 1px solid #aab;
  background: #fff;
  color: #111;
  font: 15px "Noto Sans", sans-serif;
}
```
